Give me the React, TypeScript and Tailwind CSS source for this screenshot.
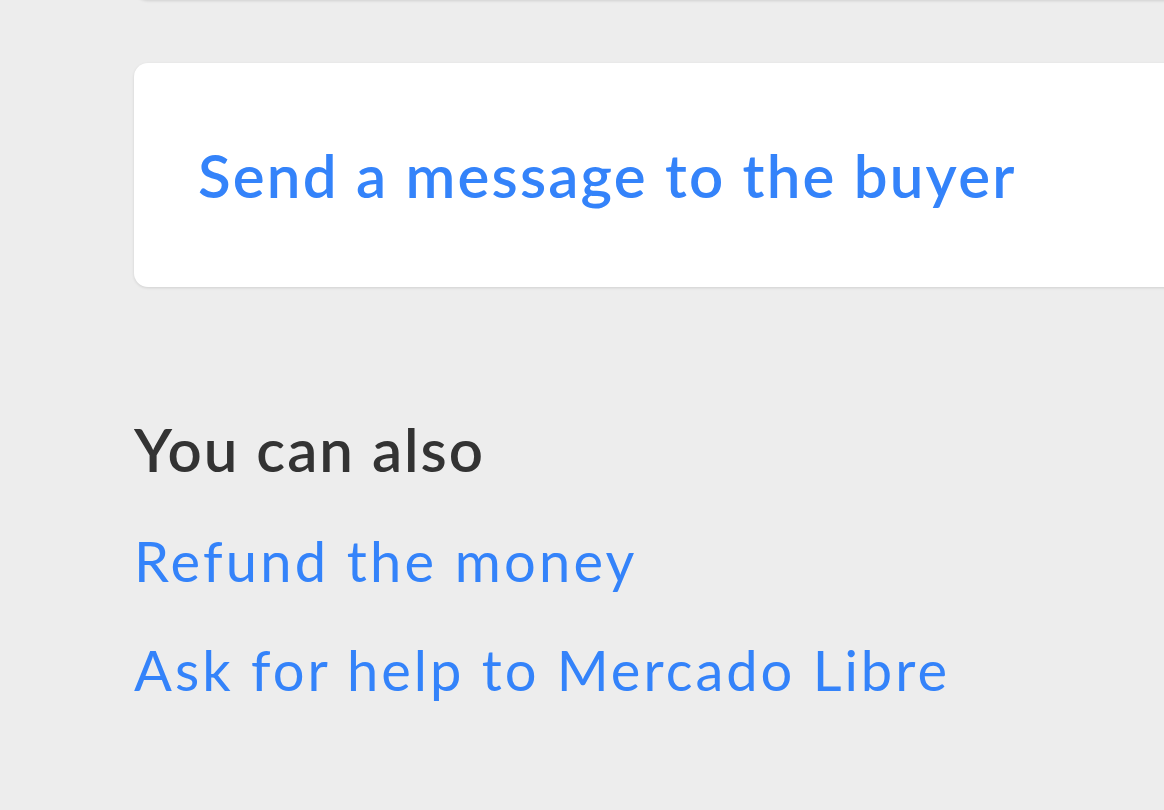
export default function App() {
  return (
    <div
      className="w-[1164px] h-[810px] bg-[#ededed] overflow-hidden"
      style={{ fontFamily: "Lato, 'Open Sans', sans-serif" }}
    >
      <div className="ml-[134px] mr-[-40px] -mt-[20px] h-[20px] rounded-b-[14px] bg-white shadow-[0_1px_3px_rgba(0,0,0,0.12)]" />
      <div className="ml-[134px] mr-[-40px] mt-[63px] h-[224px] rounded-[14px] bg-white shadow-[0_1px_3px_rgba(0,0,0,0.12)] flex items-center pl-[64px]">
        <span className="text-[#3483fa] text-[60px] font-semibold leading-none tracking-[2.2px]">
          Send a message to the buyer
        </span>
      </div>
      <div className="ml-[134px] mt-[132px] flex flex-col">
        <div className="text-[#333333] text-[60px] font-semibold leading-none tracking-[2px]">You can also</div>
        <div className="mt-[54px] text-[#3483fa] text-[56px] leading-none tracking-[3.2px]">Refund the money</div>
        <div className="mt-[53px] text-[#3483fa] text-[56px] leading-none tracking-[3px]">Ask for help to Mercado Libre</div>
      </div>
    </div>
  );
}
